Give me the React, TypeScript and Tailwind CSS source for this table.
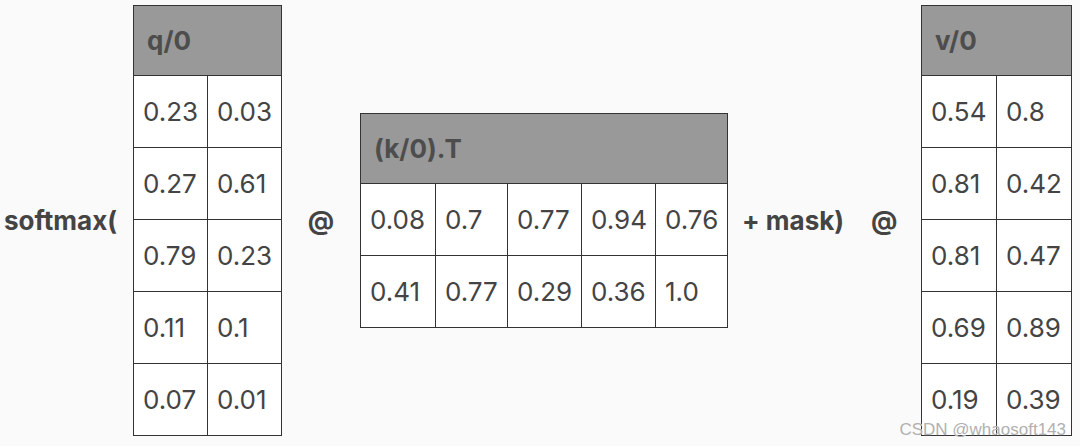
import React from "react";

const font = { fontFamily: "Inter, 'Liberation Sans', sans-serif" };

function Matrix({
  title,
  cols,
  rows,
}: {
  title: string;
  cols: number[];
  rows: string[][];
}) {
  const total = cols.reduce((a, b) => a + b, 0);
  return (
    <div className="border-l border-t border-[#333] bg-white" style={{ width: total + 1 }}>
      <div className="h-[70px] bg-[#999999] border-r border-b border-[#333] flex items-center pl-[13px] text-[26px] font-bold text-[#4d4d4d]">
        {title}
      </div>
      {rows.map((r, i) => (
        <div key={i} className="flex">
          {r.map((c, j) => (
            <div
              key={j}
              className="h-[72px] border-r border-b border-[#333] flex items-center pl-[9px] text-[26px] text-[#444]"
              style={{ width: cols[j] }}
            >
              {c}
            </div>
          ))}
        </div>
      ))}
    </div>
  );
}

export default function App() {
  return (
    <div className="w-[1080px] h-[446px] bg-[#fafafa] relative overflow-hidden" style={font}>
      <div className="flex items-center h-[446px] pb-[5px]">
        <div className="w-[133px] pl-[4px] text-[26px] font-bold text-[#444]">softmax(</div>
        <Matrix
          title="q/0"
          cols={[74, 74]}
          rows={[
            ["0.23", "0.03"],
            ["0.27", "0.61"],
            ["0.79", "0.23"],
            ["0.11", "0.1"],
            ["0.07", "0.01"],
          ]}
        />
        <div className="w-[78px] flex justify-center text-[26px] font-bold text-[#444]">@</div>
        <Matrix
          title="(k/0).T"
          cols={[75, 72, 74, 74, 72]}
          rows={[
            ["0.08", "0.7", "0.77", "0.94", "0.76"],
            ["0.41", "0.77", "0.29", "0.36", "1.0"],
          ]}
        />
        <div className="w-[193px] flex items-center pl-[14px] text-[26px] font-bold text-[#444]">
          <span>+ mask)</span>
          <span className="ml-[27px]">@</span>
        </div>
        <Matrix
          title="v/0"
          cols={[75, 75]}
          rows={[
            ["0.54", "0.8"],
            ["0.81", "0.42"],
            ["0.81", "0.47"],
            ["0.69", "0.89"],
            ["0.19", "0.39"],
          ]}
        />
      </div>
      <div className="absolute right-[14px] bottom-[8px] text-[17px] text-[#b0b0b0] leading-none" style={{ fontFamily: "'Liberation Sans', sans-serif", textShadow: "0 0 1px #fff" }}>
        CSDN @whaosoft143
      </div>
    </div>
  );
}
